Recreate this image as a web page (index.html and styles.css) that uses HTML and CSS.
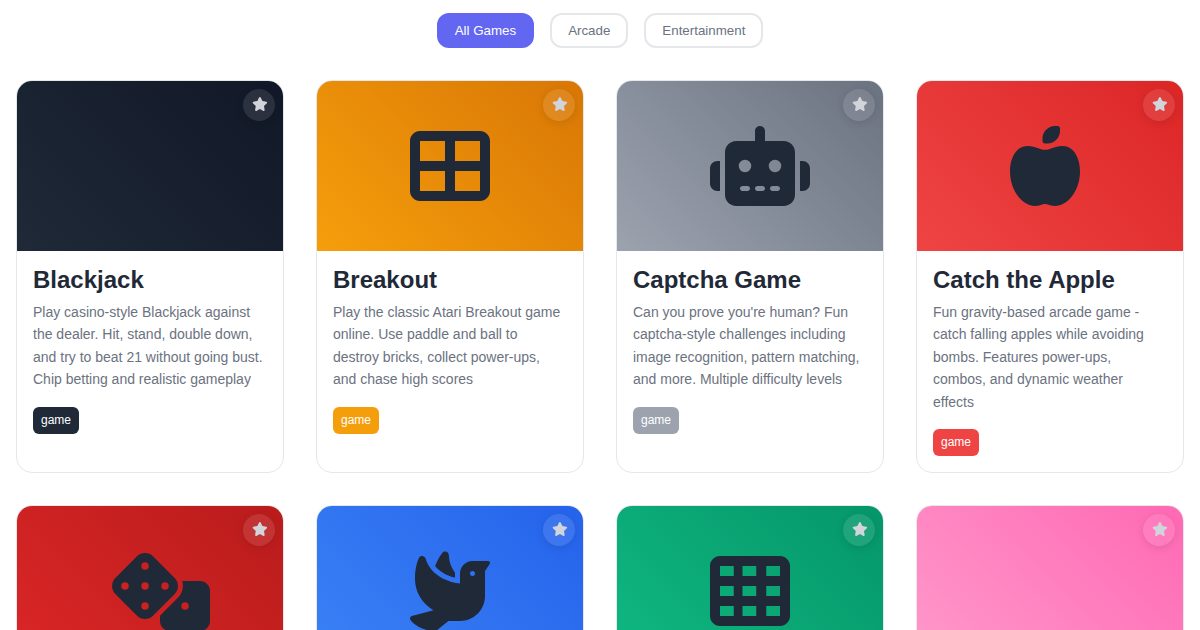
FILE: index.html
```html
<!DOCTYPE html>
<html lang="en">
<head>
<meta charset="utf-8">
<meta name="viewport" content="width=device-width, initial-scale=1">
<title>Games</title>
<link rel="stylesheet" href="styles.css">
</head>
<body>
<svg class="sprite" aria-hidden="true">
  <symbol id="star" viewBox="0 0 576 512" preserveAspectRatio="xMinYMid slice" overflow="visible"><path d="M316.9 18C311.600 7 300.400 0 288.100 0s-23.400 7-28.800 18L195 150.300 51.400 171.500c-12 1.800-22 10.200-25.700 21.700s-.7 24.200 7.900 32.700L137.800 329 113.200 474.700c-2 12 3 24.200 12.900 31.300s23 8 33.800 2.300l128.300-68.500 128.300 68.500c10.800 5.700 23.900 4.900 33.800-2.300s14.900-19.300 12.900-31.300L438.500 329 542.700 225.900c8.600-8.500 11.700-21.200 7.900-32.700s-13.700-19.900-25.700-21.700L381.200 150.300 316.900 18z"/></symbol>
</svg>
<main class="page">
  <nav class="filters" aria-label="Game categories">
    <button class="filter filter-active" type="button">All Games</button>
    <button class="filter" type="button">Arcade</button>
    <button class="filter" type="button">Entertainment</button>
  </nav>
  <section class="grid">
    <article class="card dark">
      <div class="cover"><button class="favorite" type="button" aria-label="Favorite"><svg class="star"><use href="#star"/></svg></button></div>
      <div class="body">
        <h2 class="title">Blackjack</h2>
        <p class="text">Play casino-style Blackjack against the dealer. Hit, stand, double down, and try to beat 21 without going bust. Chip betting and realistic gameplay</p>
        <span class="tag">game</span>
      </div>
    </article>
    <article class="card amber">
      <div class="cover">
        <svg class="icon" viewBox="0 0 512 512"><path d="M448 96V224H288V96H448zm0 192V416H288V288H448zM224 224H64V96H224V224zM64 288H224V416H64V288zM64 32C28.700 32 0 60.700 0 96V416c0 35.300 28.700 64 64 64H448c35.300 0 64-28.700 64-64V96c0-35.300-28.700-64-64-64H64z"/></svg>
        <button class="favorite" type="button" aria-label="Favorite"><svg class="star"><use href="#star"/></svg></button>
      </div>
      <div class="body">
        <h2 class="title">Breakout</h2>
        <p class="text">Play the classic Atari Breakout game online. Use paddle and ball to destroy bricks, collect power-ups, and chase high scores</p>
        <span class="tag">game</span>
      </div>
    </article>
    <article class="card gray">
      <div class="cover">
        <svg class="icon" viewBox="0 0 640 512" preserveAspectRatio="xMinYMid slice"><path d="M320 0c17.700 0 32 14.300 32 32V96H472c39.800 0 72 32.200 72 72V440c0 39.800-32.200 72-72 72H168c-39.800 0-72-32.200-72-72V168c0-39.800 32.200-72 72-72H288V32c0-17.700 14.300-32 32-32zM208 384c-8.800 0-16 7.200-16 16s7.200 16 16 16h32c8.800 0 16-7.200 16-16s-7.200-16-16-16H208zm96 0c-8.800 0-16 7.200-16 16s7.200 16 16 16h32c8.800 0 16-7.200 16-16s-7.200-16-16-16H304zm96 0c-8.800 0-16 7.200-16 16s7.200 16 16 16h32c8.800 0 16-7.200 16-16s-7.200-16-16-16H400zM264 256a40 40 0 1 0 -80 0 40 40 0 1 0 80 0zm152 40a40 40 0 1 0 0-80 40 40 0 1 0 0 80zM48 224H64V416H48c-26.500 0-48-21.500-48-48V272c0-26.500 21.500-48 48-48zm544 0c26.500 0 48 21.500 48 48v96c0 26.500-21.500 48-48 48H576V224h16z"/></svg>
        <button class="favorite" type="button" aria-label="Favorite"><svg class="star"><use href="#star"/></svg></button>
      </div>
      <div class="body">
        <h2 class="title">Captcha Game</h2>
        <p class="text">Can you prove you're human? Fun captcha-style challenges including image recognition, pattern matching, and more. Multiple difficulty levels</p>
        <span class="tag">game</span>
      </div>
    </article>
    <article class="card red">
      <div class="cover">
        <svg class="icon" viewBox="0 0 448 512" preserveAspectRatio="xMinYMid meet"><path d="M224 112c-8.800 0-16-7.200-16-16V80c0-44.200 35.800-80 80-80h16c8.800 0 16 7.200 16 16V32c0 44.200-35.800 80-80 80H224zM0 288c0-76.300 35.700-160 112-160c27.300 0 59.700 10.300 82.700 19.300c18.800 7.300 39.900 7.300 58.700 0c22.900-8.900 55.400-19.300 82.700-19.300c76.300 0 112 83.700 112 160c0 128-80 224-160 224c-16.500 0-38.100-6.600-51.500-11.300c-8.100-2.800-16.900-2.800-25 0c-13.400 4.700-35 11.300-51.500 11.300C80 512 0 416 0 288z"/></svg>
        <button class="favorite" type="button" aria-label="Favorite"><svg class="star"><use href="#star"/></svg></button>
      </div>
      <div class="body">
        <h2 class="title">Catch the Apple</h2>
        <p class="text">Fun gravity-based arcade game - catch falling apples while avoiding bombs. Features power-ups, combos, and dynamic weather effects</p>
        <span class="tag">game</span>
      </div>
    </article>
    <article class="card crimson">
      <div class="cover">
        <svg class="icon" viewBox="0 0 640 512" preserveAspectRatio="xMinYMid slice"><path d="M274.900 34.300c-28.100-28.100-73.700-28.100-101.800 0L34.300 173.100c-28.100 28.100-28.100 73.700 0 101.800L173.100 413.700c28.100 28.100 73.700 28.100 101.800 0L413.700 274.900c28.100-28.100 28.100-73.700 0-101.800L274.900 34.300zM200 224a24 24 0 1 1 48 0 24 24 0 1 1 -48 0zM96 200a24 24 0 1 1 0 48 24 24 0 1 1 0-48zM224 376a24 24 0 1 1 0-48 24 24 0 1 1 0 48zM352 200a24 24 0 1 1 0 48 24 24 0 1 1 0-48zM224 120a24 24 0 1 1 0-48 24 24 0 1 1 0 48zm96 328c0 35.300 28.700 64 64 64H576c35.300 0 64-28.700 64-64V256c0-35.300-28.700-64-64-64H461.700c11.600 36 3.100 77-25.400 105.500L320 413.800V448zM480 328a24 24 0 1 1 0 48 24 24 0 1 1 0-48z"/></svg>
        <button class="favorite" type="button" aria-label="Favorite"><svg class="star"><use href="#star"/></svg></button>
      </div>
    </article>
    <article class="card blue">
      <div class="cover">
        <svg class="icon" viewBox="0 0 512 512"><path d="M160.800 96.500c14 17 31 30.900 49.500 42.200c25.900 15.800 53.700 25.900 77.700 31.600V138.800C265.800 108.500 250 71.500 248.600 28c-.4-11.300-7.500-21.500-18.400-24.400c-7.600-2-15.800-.2-21 5.800c-13.300 15.400-32.700 44.600-48.400 87.200zM320 144v64c-60.800-5.100-185-43.800-219.300-157.200C97.400 40 87.900 32 76.600 32c-7.900 0-15.300 3.900-18.800 11C46.800 65.900 32 112.100 32 176c0 116.900 80.100 180.500 118.400 202.800L11.800 416.600C6.700 418 2.600 421.800 .9 426.800s-.8 10.600 2.300 14.800C21.700 466.200 77.300 512 160 512c3.600 0 7.200-1.200 10-3.500L245.600 448H320c88.400 0 160-71.600 160-160V128l29.900-44.900c1.300-2 2.100-4.400 2.100-6.800c0-6.800-5.500-12.300-12.300-12.300H400c-44.200 0-80 35.800-80 80zm80-16a16 16 0 1 1 0 32 16 16 0 1 1 0-32z"/></svg>
        <button class="favorite" type="button" aria-label="Favorite"><svg class="star"><use href="#star"/></svg></button>
      </div>
    </article>
    <article class="card green">
      <div class="cover">
        <svg class="icon" viewBox="0 0 512 512"><path fill-rule="evenodd" d="M64 32C28.700 32 0 60.700 0 96V416c0 35.300 28.700 64 64 64H448c35.300 0 64-28.700 64-64V96c0-35.300-28.700-64-64-64H64zM64 96h88v64H64zM208 96h88v64h-88zM360 96h88v64h-88zM64 224h88v64H64zM208 224h88v64h-88zM360 224h88v64h-88zM64 352h88v64H64zM208 352h88v64h-88zM360 352h88v64h-88z"/></svg>
        <button class="favorite" type="button" aria-label="Favorite"><svg class="star"><use href="#star"/></svg></button>
      </div>
    </article>
    <article class="card pink">
      <div class="cover"><button class="favorite" type="button" aria-label="Favorite"><svg class="star"><use href="#star"/></svg></button></div>
    </article>
  </section>
</main>
</body>
</html>
```
FILE: styles.css
```css
* { box-sizing: border-box; }

body {
  margin: 0;
  height: 100vh;
  overflow: hidden;
  background: #fff;
  color: #1f2937;
  font-family: "Liberation Sans", Arial, sans-serif;
  line-height: 1.6;
}

.sprite { display: none; }

.page { padding: 13px 16px 32px; }

.filters {
  display: flex;
  flex-wrap: wrap;
  justify-content: center;
  gap: 16px;
  margin-bottom: 32px;
}

.filter {
  padding: 8px 16px;
  border: 2px solid #e5e7eb;
  border-radius: 12px;
  background: #fff;
  color: #6b7280;
  font-family: inherit;
  cursor: pointer;
}

.filter-active {
  border-color: #6366f1;
  background: #6366f1;
  color: #fff;
}

.grid {
  display: grid;
  grid-template-columns: repeat(auto-fill, minmax(260px, 1fr));
  gap: 32px;
}

.card {
  border: 1px solid #e5e7eb;
  border-radius: 16px;
  overflow: hidden;
  background: #fff;
}

.cover {
  position: relative;
  display: flex;
  align-items: center;
  justify-content: center;
  height: 170px;
  background: linear-gradient(45deg, var(--from), var(--to));
}

.icon {
  width: 80px;
  height: 80px;
  overflow: visible;
  fill: #1f2937;
}

.favorite {
  position: absolute;
  top: 8px;
  right: 8px;
  display: flex;
  align-items: center;
  justify-content: center;
  width: 32px;
  height: 32px;
  padding: 0 0 2px;
  border: 0;
  border-radius: 50%;
  background: rgba(255, 255, 255, 0.1);
  box-shadow: 0 2px 8px rgba(0, 0, 0, 0.1);
  cursor: pointer;
}

.star {
  width: 14px;
  height: 14px;
  overflow: visible;
  fill: #d1d5db;
}

.body { padding: 16px; }

.title {
  margin: 0 0 8px;
  font-size: 24px;
  line-height: 26px;
}

.text {
  margin: 0 0 16px;
  color: #6b7280;
  font-size: 14px;
}

.tag {
  display: block;
  width: fit-content;
  padding: 4px 8px;
  border-radius: 6px;
  background: var(--from);
  color: #fff;
  font-size: 12px;
}

.dark { --from: #1f2937; --to: #111827; }
.amber { --from: #f59e0b; --to: #d97706; }
.gray { --from: #9ca3af; --to: #6b7280; }
.red { --from: #ef4444; --to: #dc2626; }
.crimson { --from: #dc2626; --to: #b91c1c; }
.blue { --from: #3b82f6; --to: #2563eb; }
.green { --from: #10b981; --to: #059669; }
.pink { --from: #ff9acb; --to: #ff69b4; }
```
